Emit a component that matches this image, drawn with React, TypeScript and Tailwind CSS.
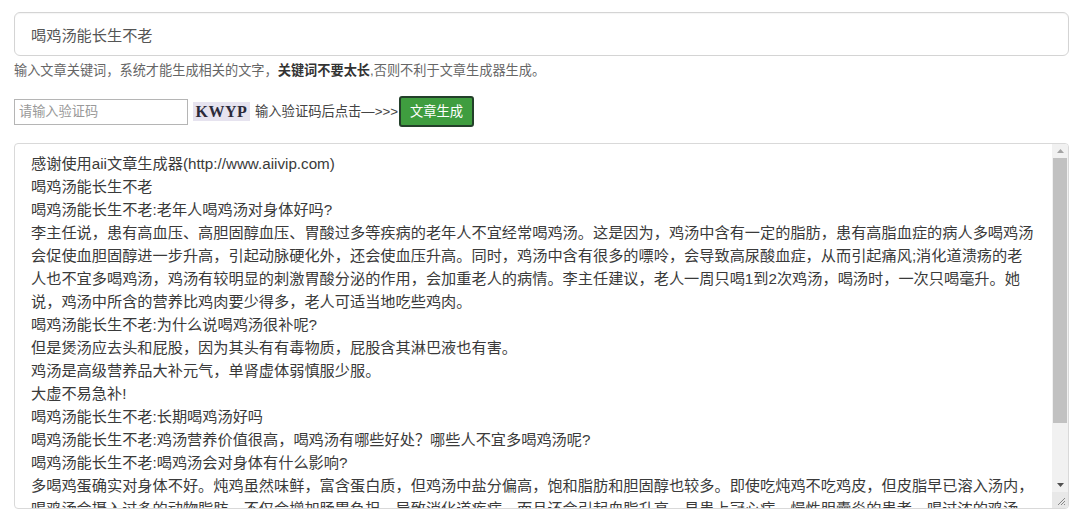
import React from "react";

const lines: string[] = [
  "感谢使用aii文章生成器(http://www.aiivip.com)",
  "喝鸡汤能长生不老",
  "喝鸡汤能长生不老:老年人喝鸡汤对身体好吗?",
  "李主任说，患有高血压、高胆固醇血压、胃酸过多等疾病的老年人不宜经常喝鸡汤。这是因为，鸡汤中含有一定的脂肪，患有高脂血症的病人多喝鸡汤",
  "会促使血胆固醇进一步升高，引起动脉硬化外，还会使血压升高。同时，鸡汤中含有很多的嘌呤，会导致高尿酸血症，从而引起痛风;消化道溃疡的老",
  "人也不宜多喝鸡汤，鸡汤有较明显的刺激胃酸分泌的作用，会加重老人的病情。李主任建议，老人一周只喝1到2次鸡汤，喝汤时，一次只喝毫升。她",
  "说，鸡汤中所含的营养比鸡肉要少得多，老人可适当地吃些鸡肉。",
  "喝鸡汤能长生不老:为什么说喝鸡汤很补呢?",
  "但是煲汤应去头和屁股，因为其头有有毒物质，屁股含其淋巴液也有害。",
  "鸡汤是高级营养品大补元气，单肾虚体弱慎服少服。",
  "大虚不易急补!",
  "喝鸡汤能长生不老:长期喝鸡汤好吗",
  "喝鸡汤能长生不老:鸡汤营养价值很高，喝鸡汤有哪些好处？哪些人不宜多喝鸡汤呢?",
  "喝鸡汤能长生不老:喝鸡汤会对身体有什么影响?",
  "多喝鸡蛋确实对身体不好。炖鸡虽然味鲜，富含蛋白质，但鸡汤中盐分偏高，饱和脂肪和胆固醇也较多。即使吃炖鸡不吃鸡皮，但皮脂早已溶入汤内，",
  "喝鸡汤会摄入过多的动物脂肪，不仅会增加肠胃负担，导致消化道疾病，而且还会引起血脂升高，易患上冠心病、慢性胆囊炎的患者，喝过浓的鸡汤",
];

const font = { fontFamily: '"Liberation Sans", "Noto Sans CJK SC", sans-serif' };

export default function App() {
  return (
    <div
      className="w-[1080px] h-[516px] bg-white overflow-hidden pt-[12px] pl-[14px] pr-[11px] text-[#333]"
      style={font}
    >
      {/* keyword input */}
      <input
        readOnly
        defaultValue="喝鸡汤能长生不老"
        className="block w-full h-[44px] border border-[#d4d4d4] rounded-[6px] pl-[16px] text-[15.2px] text-[#555] bg-white outline-none shadow-[inset_0_1px_1px_rgba(0,0,0,0.04)]"
        style={font}
      />

      {/* helper */}
      <div className="mt-[6px] h-[18px] leading-[18px] text-[13.2px] text-[#666] whitespace-nowrap">
        输入文章关键词，系统才能生成相关的文字，
        <span className="font-bold text-[#333]">关键词不要太长</span>
        ,否则不利于文章生成器生成。
      </div>

      {/* captcha row */}
      <div className="mt-[16px] h-[31px] flex items-center">
        <input
          readOnly
          placeholder="请输入验证码"
          className="w-[174px] h-[26px] border border-[#b5b5b5] pl-[4px] text-[13.2px] placeholder:text-[#999] outline-none bg-white"
          style={font}
        />
        <div
          className="ml-[5px] h-[19px] w-[57px] bg-[#e6e3ef] flex items-center justify-center text-[16px] font-bold text-[#2b2a3a] leading-none tracking-[0.5px]"
          style={{ fontFamily: '"Liberation Serif", serif' }}
        >
          KWYP
        </div>
        <span className="ml-[5px] text-[13.3px] text-[#444] whitespace-nowrap">
          输入验证码后点击—&gt;&gt;&gt;
        </span>
        <button
          className="ml-[1px] w-[75px] h-[31px] bg-[#3f9d3f] border-2 border-[#23402a] rounded-[3px] text-white text-[13.3px] flex items-center justify-center"
          style={font}
        >
          文章生成
        </button>
      </div>

      {/* result textarea */}
      <div className="mt-[16px] h-[366px] border border-[#d9d9d9] rounded-[4px] flex overflow-hidden bg-white">
        <div className="flex-1 overflow-hidden pl-[16px] pt-[8px] text-[15.2px] leading-[23px] text-[#3a3a3a]">
          {lines.map((l, i) => (
            <div key={i} className="whitespace-nowrap">
              {l}
            </div>
          ))}
        </div>
        {/* scrollbar */}
        <div className="w-[16px] flex flex-col bg-[#f1f1f1]">
          <div className="h-[14px] flex items-center justify-center">
            <svg width="7" height="4" viewBox="0 0 7 4">
              <polygon points="3.5,0 7,4 0,4" fill="#a3a3a3" />
            </svg>
          </div>
          <div className="h-[265px] mx-[1px] bg-[#c1c1c1]" />
          <div className="flex-1" />
          <div className="h-[15px] flex items-center justify-center">
            <svg width="7" height="4" viewBox="0 0 7 4">
              <polygon points="0,0 7,0 3.5,4" fill="#505050" />
            </svg>
          </div>
          <div className="h-[16px] bg-[#e8e8e8] flex items-end justify-end pr-[2px] pb-[2px]">
            <svg width="10" height="10" viewBox="0 0 10 10">
              <line x1="2" y1="9" x2="9" y2="2" stroke="#888" strokeWidth="1" />
              <line x1="5" y1="9" x2="9" y2="5" stroke="#888" strokeWidth="1" />
              <line x1="8" y1="9" x2="9" y2="8" stroke="#888" strokeWidth="1" />
            </svg>
          </div>
        </div>
      </div>
    </div>
  );
}
